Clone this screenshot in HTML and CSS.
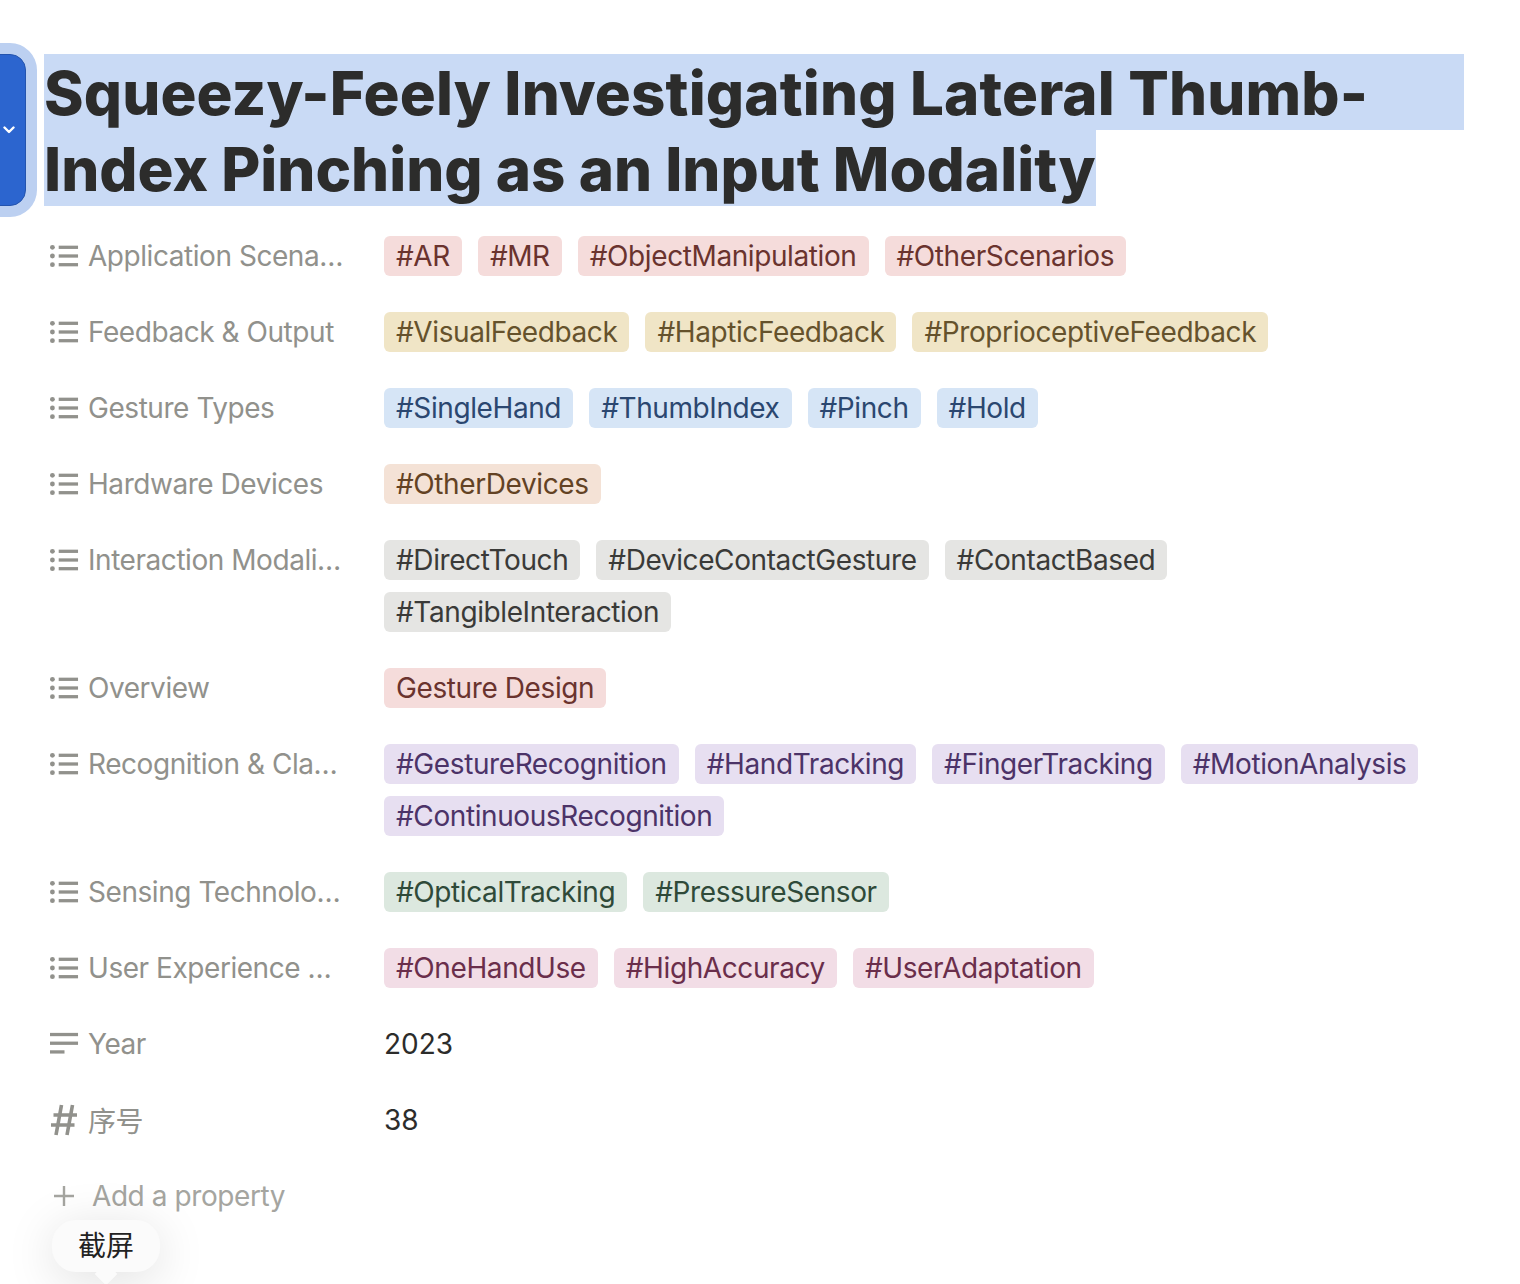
FILE: index.html
```html
<!DOCTYPE html>
<html lang="en">
<head>
    <meta charset="UTF-8">
    <title>Squeezy-Feely</title>
    <link rel="stylesheet" href="styles.css">
</head>
<body>
    <div class="handle">
        <svg class="chevron" width="12" height="8" viewBox="0 0 12 8"><path d="M1.5 1.5 L6 6 L10.5 1.5" fill="none" stroke="#fff" stroke-width="2.4" stroke-linecap="round" stroke-linejoin="round"/></svg>
    </div>

    <div class="page">
        <h1 class="title">
            <span class="sel sel-full">Squeezy-Feely Investigating Lateral Thumb-</span>
            <span class="sel">Index Pinching as an Input Modality</span>
        </h1>

        <div class="props">
            <div class="row">
                <div class="name">
                    <svg class="icon" viewBox="0 0 30 24"><use href="#list"/></svg>
                    <span>Application Scena…</span>
                </div>
                <div class="tags">
                    <span class="tag red">#AR</span>
                    <span class="tag red">#MR</span>
                    <span class="tag red">#ObjectManipulation</span>
                    <span class="tag red">#OtherScenarios</span>
                </div>
            </div>
            <div class="row">
                <div class="name">
                    <svg class="icon" viewBox="0 0 30 24"><use href="#list"/></svg>
                    <span>Feedback &amp; Output</span>
                </div>
                <div class="tags">
                    <span class="tag yellow">#VisualFeedback</span>
                    <span class="tag yellow">#HapticFeedback</span>
                    <span class="tag yellow">#ProprioceptiveFeedback</span>
                </div>
            </div>
            <div class="row">
                <div class="name">
                    <svg class="icon" viewBox="0 0 30 24"><use href="#list"/></svg>
                    <span>Gesture Types</span>
                </div>
                <div class="tags">
                    <span class="tag blue">#SingleHand</span>
                    <span class="tag blue">#ThumbIndex</span>
                    <span class="tag blue">#Pinch</span>
                    <span class="tag blue">#Hold</span>
                </div>
            </div>
            <div class="row">
                <div class="name">
                    <svg class="icon" viewBox="0 0 30 24"><use href="#list"/></svg>
                    <span>Hardware Devices</span>
                </div>
                <div class="tags">
                    <span class="tag orange">#OtherDevices</span>
                </div>
            </div>
            <div class="row">
                <div class="name">
                    <svg class="icon" viewBox="0 0 30 24"><use href="#list"/></svg>
                    <span>Interaction Modali…</span>
                </div>
                <div class="tags">
                    <span class="tag gray">#DirectTouch</span>
                    <span class="tag gray">#DeviceContactGesture</span>
                    <span class="tag gray">#ContactBased</span>
                    <span class="tag gray">#TangibleInteraction</span>
                </div>
            </div>
            <div class="row">
                <div class="name">
                    <svg class="icon" viewBox="0 0 30 24"><use href="#list"/></svg>
                    <span>Overview</span>
                </div>
                <div class="tags">
                    <span class="tag red">Gesture Design</span>
                </div>
            </div>
            <div class="row">
                <div class="name">
                    <svg class="icon" viewBox="0 0 30 24"><use href="#list"/></svg>
                    <span>Recognition &amp; Cla…</span>
                </div>
                <div class="tags">
                    <span class="tag purple">#GestureRecognition</span>
                    <span class="tag purple">#HandTracking</span>
                    <span class="tag purple">#FingerTracking</span>
                    <span class="tag purple">#MotionAnalysis</span>
                    <span class="tag purple">#ContinuousRecognition</span>
                </div>
            </div>
            <div class="row">
                <div class="name">
                    <svg class="icon" viewBox="0 0 30 24"><use href="#list"/></svg>
                    <span>Sensing Technolo…</span>
                </div>
                <div class="tags">
                    <span class="tag green">#OpticalTracking</span>
                    <span class="tag green">#PressureSensor</span>
                </div>
            </div>
            <div class="row">
                <div class="name">
                    <svg class="icon" viewBox="0 0 30 24"><use href="#list"/></svg>
                    <span>User Experience …</span>
                </div>
                <div class="tags">
                    <span class="tag pink">#OneHandUse</span>
                    <span class="tag pink">#HighAccuracy</span>
                    <span class="tag pink">#UserAdaptation</span>
                </div>
            </div>
            <div class="row">
                <div class="name">
                    <svg class="icon" viewBox="0 0 30 24">
                        <rect x="0" y="0.5" width="29" height="3.4"/>
                        <rect x="0" y="9.5" width="29" height="3.4"/>
                        <rect x="0" y="18.5" width="15" height="3.4"/>
                    </svg>
                    <span>Year</span>
                </div>
                <div class="value">2023</div>
            </div>
            <div class="row">
                <div class="name">
                    <svg class="icon icon-tall" viewBox="0 0 29 32">
                        <path d="M11.5 1 L6 31 M22.5 1 L17 31 M3.5 11 H27 M1 21 H24.5" fill="none" stroke="#91918c" stroke-width="3.6"/>
                    </svg>
                    <span>序号</span>
                </div>
                <div class="value">38</div>
            </div>
            <div class="row add">
                <svg class="plus" viewBox="0 0 22 22"><path d="M11 1 V21 M1 11 H21" fill="none" stroke="#a5a5a0" stroke-width="2.4"/></svg>
                <span>Add a property</span>
            </div>
        </div>
    </div>

    <div class="bubble">截屏</div>

    <svg width="0" height="0" class="defs">
        <symbol id="list" viewBox="0 0 30 24">
            <circle cx="2.5" cy="3" r="2.5" fill="#91918c"/>
            <circle cx="2.5" cy="12" r="2.5" fill="#91918c"/>
            <circle cx="2.5" cy="21" r="2.5" fill="#91918c"/>
            <rect x="9" y="1.3" width="20" height="3.4" fill="#91918c"/>
            <rect x="9" y="10.3" width="20" height="3.4" fill="#91918c"/>
            <rect x="9" y="19.3" width="20" height="3.4" fill="#91918c"/>
        </symbol>
    </svg>
</body>
</html>
```

FILE: styles.css
```css
html, body {
    height: 100%;
}
body {
    margin: 0;
    background-color: #fff;
    font-family: 'Inter', 'Noto Sans CJK SC', sans-serif;
    overflow: hidden;
    position: relative;
}
.defs {
    position: absolute;
}
.page {
    padding: 54px 56px 0 44px;
}
.title {
    margin: 0 0 30px 0;
    font-size: 60px;
    line-height: 74px;
    font-weight: 800;
    color: #2c2c2b;
}
.sel {
    display: table;
    padding-top: 2px;
    background-color: #c9daf5;
    white-space: nowrap;
}
.sel-full {
    display: block;
    letter-spacing: 0.15px;
}
.props {
    display: flex;
    flex-direction: column;
    gap: 36px;
}
.row {
    display: flex;
    min-height: 40px;
}
.name {
    flex: 0 0 340px;
    display: flex;
    align-items: center;
    align-self: flex-start;
    height: 40px;
    padding-left: 6px;
    box-sizing: border-box;
    gap: 9px;
    font-size: 28px;
    letter-spacing: -0.45px;
    color: #91918c;
}
.icon {
    width: 29px;
    height: 24px;
    flex: none;
    fill: #91918c;
}
.icon-tall {
    height: 32px;
}
.tags {
    display: flex;
    flex-wrap: wrap;
    gap: 12px 16px;
    flex: 1;
}
.tag {
    height: 40px;
    line-height: 40px;
    padding: 0 12px;
    border-radius: 6px;
    font-size: 28px;
    letter-spacing: -0.4px;
    white-space: nowrap;
}
.red { background-color: #f5dcdb; color: #6a332e; }
.yellow { background-color: #f0e5c6; color: #65522c; }
.blue { background-color: #d6e5f6; color: #2b4770; }
.orange { background-color: #f4e2d6; color: #634224; }
.gray { background-color: #e5e5e3; color: #3a3a38; }
.purple { background-color: #e7dff1; color: #4c3368; }
.green { background-color: #dce8df; color: #2f4a39; }
.pink { background-color: #f2dde6; color: #6a2e4b; }
.value {
    line-height: 40px;
    font-size: 28px;
    color: #2c2c2b;
}
.add {
    align-items: center;
    padding-left: 9px;
    gap: 17px;
    font-size: 28px;
    letter-spacing: -0.42px;
    color: #a5a5a0;
}
.plus {
    width: 22px;
    height: 22px;
}
.handle {
    position: absolute;
    left: -20px;
    top: 54px;
    width: 46px;
    height: 152px;
    box-sizing: border-box;
    background-color: #2c65cf;
    border: 1px solid #2454ae;
    border-radius: 16px;
    box-shadow: 0 0 0 11px #bcd0f1;
}
.chevron {
    position: absolute;
    left: 22px;
    top: 71px;
}
.bubble {
    position: absolute;
    left: 52px;
    top: 1220px;
    width: 108px;
    height: 52px;
    line-height: 52px;
    text-align: center;
    font-size: 28px;
    color: #222;
    background-color: #fbfbfb;
    border-radius: 24px;
    box-shadow: 0 8px 50px rgba(0, 0, 0, 0.13);
}
.bubble::after {
    content: "";
    position: absolute;
    left: 46px;
    top: 46px;
    width: 16px;
    height: 16px;
    background-color: #fbfbfb;
    transform: rotate(45deg);
}
```
